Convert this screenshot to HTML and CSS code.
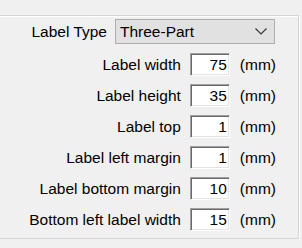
FILE: index.html
```html
<!DOCTYPE html>
<html lang="en">
<head>
  <meta charset="UTF-8" />
  <title>Label Settings</title>
  <link rel="stylesheet" href="styles.css">
</head>
<body>
  <div class="group">
    <div class="type-row">
      <span class="caption">Label Type</span>
      <div class="select">
        <span>Three-Part</span>
        <svg width="12" height="7" viewBox="0 0 12 7"><polyline points="0.5,0.5 6,6 11.5,0.5" fill="none" stroke="#333" stroke-width="1.1" /></svg>
      </div>
    </div>
    <div class="field"><label>Label width</label><input class="num" type="text" value="75" /><span class="unit">(mm)</span></div>
    <div class="field"><label>Label height</label><input class="num" type="text" value="35" /><span class="unit">(mm)</span></div>
    <div class="field"><label>Label top</label><input class="num" type="text" value="1" /><span class="unit">(mm)</span></div>
    <div class="field"><label>Label left margin</label><input class="num" type="text" value="1" /><span class="unit">(mm)</span></div>
    <div class="field"><label>Label bottom margin</label><input class="num" type="text" value="10" /><span class="unit">(mm)</span></div>
    <div class="field"><label>Bottom left label width</label><input class="num" type="text" value="15" /><span class="unit">(mm)</span></div>
  </div>
</body>
</html>
```

FILE: styles.css
```css
* {
  box-sizing: border-box;
}

body {
  margin: 0;
  padding-top: 15px;
  background: #f0f0f0;
  color: #000;
  font-family: "Liberation Sans", Arial, sans-serif;
  font-size: 15.5px;
  overflow: hidden;
}

.group {
  margin-left: -10px;
  width: 309px;
  padding: 3px 22px 7px 0;
  border: 1px solid #d5d5d5;
  box-shadow: inset 1px 1px 0 #fff, 1px 1px 0 #fff;
  display: flex;
  flex-direction: column;
  align-items: flex-end;
  gap: 8px;
}

.type-row {
  display: flex;
  align-items: center;
  gap: 8px;
  margin-right: 1px;
  margin-bottom: 1px;
}

.select {
  width: 160px;
  height: 25px;
  padding: 0 7px 0 4px;
  background: #e1e1e1;
  border: 1px solid #adadad;
  display: flex;
  align-items: center;
  justify-content: space-between;
}

.field {
  height: 23px;
  display: flex;
  align-items: center;
}

.field label {
  margin-right: 9px;
}

.num {
  width: 40px;
  height: 23px;
  margin: 0;
  padding: 0 2px;
  font: inherit;
  color: #000;
  text-align: right;
  background: #fff;
  border: 1px solid;
  border-color: #a0a0a0 #fff #fff #a0a0a0;
  box-shadow: inset 1px 1px 0 #696969, inset -1px -1px 0 #e3e3e3;
  outline: none;
}

.unit {
  margin-left: 10px;
}
```
